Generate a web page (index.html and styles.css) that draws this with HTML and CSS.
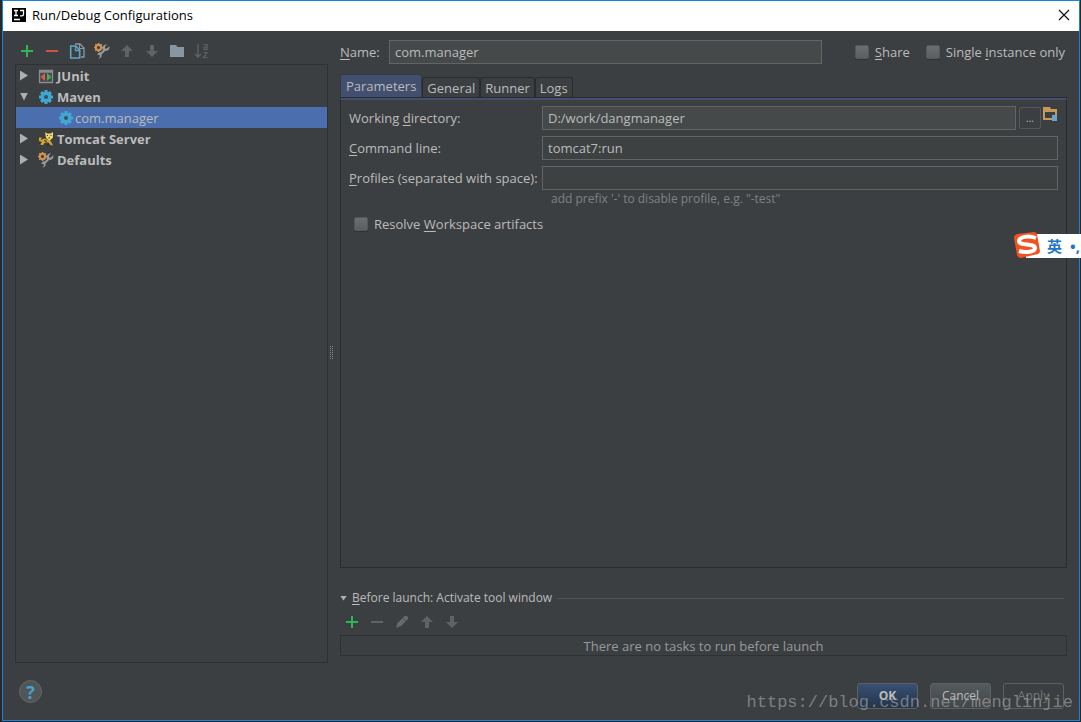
FILE: index.html
```
<!DOCTYPE html>
<html lang="en">
<head>
    <meta charset="UTF-8">
    <meta name="viewport" content="width=device-width, initial-scale=1.0">
    <title>Run/Debug Configurations</title>
    <link rel="stylesheet" href="styles.css">
</head>
<body>
    <!-- Shared icons -->
    <svg class="sprite" aria-hidden="true">
        <symbol id="plus" viewBox="0 0 16 16"><path d="M7 2h2v5h5v2H9v5H7V9H2V7h5z" fill="#2fb553"/></symbol>
        <symbol id="minus" viewBox="0 0 16 16"><path d="M2 7h12v2H2z" fill="currentColor"/></symbol>
        <symbol id="up" viewBox="0 0 16 16"><path d="M8 2l6 6h-4v6H6V8H2z" fill="#606263"/></symbol>
        <symbol id="down" viewBox="0 0 16 16"><path d="M8 14l6-6h-4V2H6v6H2z" fill="#606263"/></symbol>
        <symbol id="copy" viewBox="0 0 16 16">
            <path d="M6 1h5l4 4v9h-3" fill="none" stroke="#8e989e" stroke-width="1.3"/>
            <path d="M10.5 1v4.5H15" fill="none" stroke="#8e989e"/>
            <path d="M1.7 3h5l4 4v8h-9z" fill="#3c3f41" stroke="#62a3c8" stroke-width="1.6"/>
            <path d="M6.5 3v4.5h4" fill="none" stroke="#62a3c8" stroke-width="1.3"/>
        </symbol>
        <symbol id="wrench" viewBox="0 0 16 16">
            <circle cx="4.5" cy="4.5" r="2.7" fill="none" stroke="#cf9150" stroke-width="2.2"/>
            <path d="M4.5 0v2M4.5 7v2M0 4.5h2M7 4.5h2M1.3 1.3l1.5 1.5M7.7 1.3L6.2 2.800M1.3 7.7l1.5-1.500" stroke="#cf9150" stroke-width="1.5"/>
            <path d="M13 1.500l-2 2v2h2l2.300-2.200c1 2.700-1.300 5.200-4 4.500l-3.800 3.700c.6 2-.7 4-3 4l1.500-2-.7-1.700-2 .2c.3-2 2-3.200 3.700-2.700L9 7.200C7.500 3.500 10 1 13 1.500z" fill="#999b9d"/>
        </symbol>
        <symbol id="folder" viewBox="0 0 16 16"><path d="M1 2h6l1.500 2H15v10H1z" fill="#8796a1"/></symbol>
        <symbol id="sort" viewBox="0 0 16 16">
            <path d="M4 1v13M1 11l3 3 3-3" fill="none" stroke="#606263" stroke-width="1.3"/>
            <path d="M9.5 1.5h3.5v5H10V4h3M9.5 9.5H13l-3.5 5h4" fill="none" stroke="#606263" stroke-width="1.2"/>
        </symbol>
        <symbol id="junit" viewBox="0 0 16 16">
            <path d="M1 2h14v13H1z" fill="#45494b"/>
            <path d="M1.5 2.5h13v12h-13zM1 4h14" fill="none" stroke="#8a8d8f" stroke-width="1.3"/>
            <path d="M7 5v8L2.5 9z" fill="#e05a45"/>
            <path d="M9 5v8l4.500-4z" fill="#4aaa59"/>
        </symbol>
        <symbol id="gear" viewBox="0 0 16 16">
            <path d="M8 1v14M1 8h14M3.1 3.1l9.8 9.8M12.9 3.1l-9.8 9.8" stroke="#40a7d4" stroke-width="3"/>
            <circle cx="8" cy="8" r="5.5" fill="#40a7d4"/>
            <circle cx="8" cy="8" r="2.1" fill="#3f4f62"/>
        </symbol>
        <symbol id="tomcat" viewBox="0 0 16 16">
            <path d="M1 6.5h3L2.500 9l4-1.500L10 9l3 1.500 2 4-2.500-.5-2-2.500H7l-2 2.500H1.500L4 11 1 10z" fill="#d6a62c"/>
            <path d="M7 1l2 1.500h3.500L15 1v5.500L11.500 10 8 7z" fill="#efd571"/>
            <path d="M9 4.500h1M12.500 4.500h1M10.500 7h1.500" stroke="#3b3528" stroke-width="1.2"/>
            <path d="M1 12l2 1.500M6 9.500l3 1M8 14h3" stroke="#302d25" stroke-width="1"/>
        </symbol>
        <symbol id="pencil" viewBox="0 0 16 16"><path d="M2 14l1.500-5L10 2.500c1-1 2.500-1 3.500 0s.8 2 0 3L7 12z" fill="#676a6b"/><path d="M9 4l3 3" stroke="#4b4e50"/></symbol>
    </svg>

    <div class="dialog">
        <header class="titlebar">
            <svg class="logo" viewBox="0 0 14 14" aria-hidden="true">
                <path d="M0 0h14v14H0z" fill="#000"/>
                <path d="M2 2.500h4M4 2.500v5M2 7.500h4M8 2.500h3.500v4q0 1.300-1.500 1.300H8M2 11.500h6" fill="none" stroke="#fff" stroke-width="1.3"/>
            </svg>
            <h1>Run/Debug Configurations</h1>
            <button class="close" aria-label="Close"><svg viewBox="0 0 12 12"><path d="M1 1l10 10M11 1L1 11" stroke="#111" stroke-width="1.2"/></svg></button>
        </header>

        <main class="content">
            <section class="sidebar">
                <div class="toolbar">
                    <button aria-label="Add"><svg><use href="#plus"/></svg></button>
                    <button class="remove" aria-label="Remove"><svg><use href="#minus"/></svg></button>
                    <button aria-label="Copy"><svg><use href="#copy"/></svg></button>
                    <button aria-label="Edit defaults"><svg><use href="#wrench"/></svg></button>
                    <button aria-label="Move up"><svg><use href="#up"/></svg></button>
                    <button aria-label="Move down"><svg><use href="#down"/></svg></button>
                    <button aria-label="New folder"><svg><use href="#folder"/></svg></button>
                    <button aria-label="Sort"><svg><use href="#sort"/></svg></button>
                </div>
                <ul class="tree">
                    <li><span class="arrow"></span><svg><use href="#junit"/></svg>JUnit</li>
                    <li><span class="arrow open"></span><svg><use href="#gear"/></svg>Maven</li>
                    <li class="child selected"><svg><use href="#gear"/></svg>com.manager</li>
                    <li><span class="arrow"></span><svg><use href="#tomcat"/></svg>Tomcat Server</li>
                    <li><span class="arrow"></span><svg><use href="#wrench"/></svg>Defaults</li>
                </ul>
            </section>

            <div class="splitter"><span></span></div>

            <section class="settings">
                <div class="name-row">
                    <label for="name"><u>N</u>ame:</label>
                    <input type="text" id="name" value="com.manager">
                    <label class="check"><input type="checkbox"><span><u>S</u>hare</span></label>
                    <label class="check"><input type="checkbox"><span>Single <u>i</u>nstance only</span></label>
                </div>

                <div class="tabs">
                    <button class="tab active">Parameters</button>
                    <button class="tab">General</button>
                    <button class="tab">Runner</button>
                    <button class="tab">Logs</button>
                </div>
                <div class="pane">
                    <div class="form">
                        <label for="dir">Working <u>d</u>irectory:</label>
                        <div class="dir-field">
                            <input type="text" id="dir" value="D:/work/dangmanager">
                            <button class="browse" aria-label="Browse">...</button>
                            <button class="module" aria-label="Select module">
                                <svg viewBox="0 0 16 16"><path d="M1 1h7l1 2h6v11H1zM3 6v6h10V6z" fill="#c9975b" fill-rule="evenodd"/><path d="M10 9h5v6h-5z" fill="#69a5cc"/></svg>
                            </button>
                        </div>
                        <label for="cmd"><u>C</u>ommand line:</label>
                        <input type="text" id="cmd" value="tomcat7:run">
                        <label for="profiles"><u>P</u>rofiles (separated with space):</label>
                        <input type="text" id="profiles">
                    </div>
                    <p class="hint">add prefix '-' to disable profile, e.g. "-test"</p>
                    <label class="check resolve"><input type="checkbox"><span>Resolve <u>W</u>orkspace artifacts</span></label>
                </div>

                <div class="before-title"><span class="arrow open small"></span><h2><u>B</u>efore launch: Activate tool window</h2></div>
                <div class="toolbar before-tools">
                    <button aria-label="Add task"><svg><use href="#plus"/></svg></button>
                    <button aria-label="Remove task"><svg><use href="#minus"/></svg></button>
                    <button aria-label="Edit task"><svg><use href="#pencil"/></svg></button>
                    <button aria-label="Task up"><svg><use href="#up"/></svg></button>
                    <button aria-label="Task down"><svg><use href="#down"/></svg></button>
                </div>
                <div class="tasks">There are no tasks to run before launch</div>
            </section>
        </main>

        <footer class="footer">
            <button class="help" aria-label="Help">?</button>
            <button class="btn ok">OK</button>
            <button class="btn">Cancel</button>
            <button class="btn apply" disabled>Apply</button>
        </footer>
    </div>

    <!-- Input method bar -->
    <div class="ime">
        <svg viewBox="0 0 28 28" aria-hidden="true">
            <path d="M4 3l17-2q2 0 3 2l3 17q0 2-2 3L8 27q-3 0-4-3L1 7q0-3 3-4z" fill="#f0531f"/>
            <path d="M23 7C15 4 6 6 6 10c0 5 16 2 16 7 0 4-9 5-16 3" fill="none" stroke="#fff" stroke-width="4"/>
        </svg>
        <span>英</span><span>•,</span>
    </div>
    <div class="watermark">https://blog.csdn.net/menglinjie</div>
</body>
</html>
```
FILE: styles.css
```
* {
    box-sizing: border-box;
}

body {
    margin: 0;
    height: 100vh;
    padding: 0 1px 1px 2px;
    overflow: hidden;
    background-color: #25292d;
    color: #bbbbbb;
    font-family: "Open Sans", "Noto Sans CJK SC", sans-serif;
    font-size: 13px;
    line-height: 18px;
}

button, input {
    font: inherit;
    color: inherit;
}

button {
    padding: 0;
    border: 0;
    background: none;
}

u {
    text-underline-offset: 2px;
}

.sprite {
    display: none;
}

.dialog {
    display: flex;
    flex-direction: column;
    height: 100%;
    border: 1px solid #1883d7;
    background-color: #3c3f41;
}

/* Title bar */
.titlebar {
    display: flex;
    align-items: center;
    height: 30px;
    padding: 0 9px 2px;
    background-color: #fff;
    color: #000;
}

.logo {
    width: 14px;
    height: 14px;
    margin-right: 6px;
}

h1, h2 {
    margin: 0;
    font-size: 13px;
    font-weight: normal;
}

.close {
    display: flex;
    margin-left: auto;
}

.close svg {
    width: 12px;
    height: 12px;
}

.content {
    display: flex;
    flex: 1;
    min-height: 0;
    padding: 9px 12px 0;
}

/* Configuration list */
.sidebar {
    display: flex;
    flex-direction: column;
    flex: 0 0 313px;
}

.toolbar {
    display: flex;
    height: 24px;
}

.toolbar button {
    display: flex;
    align-items: center;
    justify-content: center;
    width: 25px;
    height: 22px;
    padding-right: 1px;
    color: #606263;
}

.toolbar .remove {
    color: #cc5346;
}

.toolbar svg, .tree svg {
    width: 16px;
    height: 16px;
}

.tree {
    flex: 1;
    margin: 0;
    padding: 0;
    border: 1px solid #2f3133;
    list-style: none;
}

.tree li {
    display: flex;
    align-items: center;
    height: 21px;
    padding-left: 4px;
    font-weight: bold;
}

.tree svg {
    margin: 0 3px 0 10px;
}

.tree .child {
    padding-left: 32px;
    font-weight: normal;
}

.tree .child svg {
    margin-right: 1px;
}

.tree .selected {
    background-color: #4b6eaf;
}

.arrow {
    width: 8px;
    height: 10px;
    background-color: #adafb0;
    clip-path: polygon(0 0, 100% 50%, 0 100%);
}

.arrow.open {
    height: 8px;
    clip-path: polygon(0 0, 100% 0, 50% 100%);
}

.arrow.small {
    width: 7px;
    height: 5px;
}

.splitter {
    display: flex;
    align-items: center;
    justify-content: center;
    flex: 0 0 12px;
}

.splitter span {
    width: 4px;
    height: 14px;
    margin-right: 4px;
    background-image: linear-gradient(#3c3f41 50%, transparent 50%), linear-gradient(90deg, #85888a 50%, transparent 50%);
    background-size: 2px 2px;
}

/* Right side */
.settings {
    display: flex;
    flex-direction: column;
    flex: 1;
    min-width: 0;
    padding-bottom: 7px;
}

input[type="text"] {
    width: 100%;
    min-width: 0;
    height: 24px;
    padding: 0 5px 1px;
    border: 1px solid #646464;
    background-color: #45494a;
}

.form #cmd, .form #profiles {
    background-color: #3e4142;
}

.name-row {
    display: flex;
    align-items: center;
    padding-right: 2px;
}

.name-row > label:first-child {
    flex: 0 0 49px;
}

.name-row input[type="text"] {
    flex: 1;
    margin-right: 17px;
}

.check {
    display: flex;
    align-items: center;
    gap: 6px;
    margin-left: 16px;
    white-space: nowrap;
}

input[type="checkbox"] {
    appearance: none;
    width: 14px;
    height: 14px;
    margin: 0;
    border: 1px solid #55585a;
    border-radius: 2px;
    background-image: linear-gradient(#6c6d6e, #5d5e5f);
    box-shadow: 0 1px #303234;
}

.tabs {
    display: flex;
    align-items: flex-end;
    margin-top: 10px;
}

.tab {
    height: 21px;
    padding: 0 4px;
    border: 1px solid #292b2d;
    border-bottom: 0;
    border-radius: 3px 3px 0 0;
}

.tab.active {
    height: 24px;
    padding: 0 5px 2px;
    border-color: #35394a;
    background-color: #424f6f;
}

.pane {
    flex: 1;
    padding: 6px 8px;
    border: 1px solid #292b2d;
    border-top: 2px solid #424f6f;
    box-shadow: 0 -1px #292b2d;
}

.form {
    display: grid;
    grid-template-columns: 193px 1fr;
    gap: 6px 0;
    align-items: center;
}

.dir-field {
    display: flex;
}

.browse {
    flex: 0 0 22px;
    height: 22px;
    margin: 1px 1px 0 3px;
    border: 1px solid #55585a;
    border-radius: 2px;
    font-size: 10px;
    line-height: 16px;
}

.module {
    flex: 0 0 16px;
    height: 16px;
}

.module svg {
    display: block;
}

.hint {
    margin: 0 0 0 202px;
    font-size: 12px;
    color: #808080;
}

.resolve {
    margin: 7px 0 0 5px;
}

.before-title {
    display: flex;
    align-items: center;
    gap: 5px;
    margin-top: 21px;
}

.before-title h2 {
    font-size: 12px;
}

.before-title::after {
    content: "";
    flex: 1;
    height: 1px;
    margin-right: 3px;
    background-color: #515456;
}

.before-tools {
    height: 28px;
    padding-top: 4px;
}

.tasks {
    height: 21px;
    border: 1px solid #2f3133;
    color: #999;
    text-align: center;
    line-height: 20px;
}

/* Bottom buttons */
.footer {
    display: flex;
    align-items: flex-end;
    gap: 12px;
    padding: 17px 15px 11px 16px;
}

.help {
    width: 23px;
    height: 23px;
    margin: 0 auto 6px 0;
    border: 1px solid #64686a;
    border-radius: 50%;
    background-color: #505557;
    color: #4a9fce;
    font-size: 18px;
    font-weight: bold;
    line-height: 20px;
}

.btn {
    width: 61px;
    height: 26px;
    border: 1px solid #5e6162;
    border-radius: 3px;
    background-image: linear-gradient(#555a5c, #414648);
    font-size: 12px;
}

.ok {
    background-image: linear-gradient(#385073, #243449);
    font-weight: bold;
}

.apply {
    background-image: none;
    color: #777;
}

/* Floating over the dialog */
.ime {
    position: absolute;
    top: 234px;
    right: 0;
    display: flex;
    align-items: center;
    gap: 8px;
    width: 55px;
    height: 24px;
    background-color: #fff;
    color: #2175c4;
    font-size: 15px;
    font-weight: bold;
    white-space: nowrap;
}

.ime svg {
    flex: 0 0 28px;
    height: 28px;
    margin: 0 -2px 2px -13px;
}

.watermark {
    position: absolute;
    right: 8px;
    bottom: 10px;
    color: rgba(170, 170, 170, 0.6);
    font-family: "Liberation Mono", monospace;
    font-size: 17px;
    pointer-events: none;
}
```
